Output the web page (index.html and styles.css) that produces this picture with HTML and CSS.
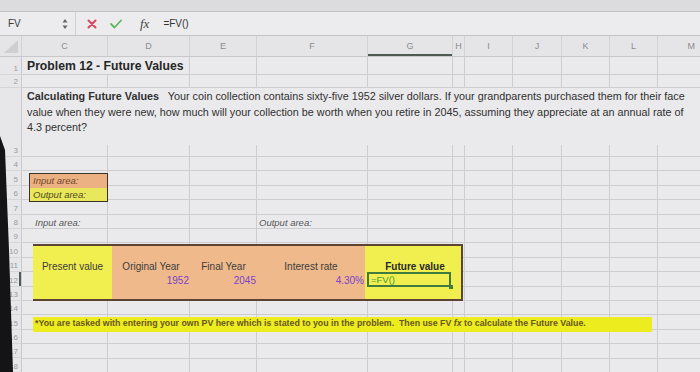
FILE: index.html
```html
<!DOCTYPE html>
<html lang="en">
<head>
    <meta charset="UTF-8">
    <meta name="viewport" content="width=device-width, initial-scale=1.0">
    <title>Problem 12 - Future Values</title>
    <link rel="stylesheet" href="styles.css">
</head>
<body>
<div class="app">

    <div class="ribbon"></div>

    <!-- Formula bar -->
    <div class="formula-bar">
        <div class="name-box">
            <span>FV</span>
            <svg class="spinner" width="6" height="12" viewBox="0 0 6 12">
                <path d="M3 1 L5.5 4.5 H0.5 Z M3 11 L5.5 7.5 H0.5 Z" fill="#666"/>
            </svg>
        </div>
        <svg class="fb-icon cancel" width="10" height="10" viewBox="0 0 10 10">
            <path d="M1.5 1.5 L8.5 8.5 M8.5 1.5 L1.5 8.5" stroke="#d9475c" stroke-width="2" stroke-linecap="round"/>
        </svg>
        <svg class="fb-icon enter" width="12" height="10" viewBox="0 0 12 10">
            <path d="M1 5 L4.5 8.5 L11 1.5" fill="none" stroke="#5cb860" stroke-width="1.8" stroke-linecap="round" stroke-linejoin="round"/>
        </svg>
        <span class="fx">fx</span>
        <span class="formula">=FV()</span>
    </div>

    <!-- Column headers -->
    <div class="col-headers">
        <span class="corner"></span>
        <span>C</span>
        <span>D</span>
        <span>E</span>
        <span>F</span>
        <span class="active">G</span>
        <span>H</span>
        <span>I</span>
        <span>J</span>
        <span>K</span>
        <span>L</span>
        <span class="last">M</span>
    </div>

    <!-- Sheet -->
    <div class="sheet">
        <span class="rh" style="grid-row: 1">1</span>
        <span class="rh" style="grid-row: 2">2</span>
        <span class="rh" style="grid-row: 3">3</span>
        <span class="rh" style="grid-row: 4">4</span>
        <span class="rh" style="grid-row: 5">5</span>
        <span class="rh" style="grid-row: 6">6</span>
        <span class="rh" style="grid-row: 7">7</span>
        <span class="rh" style="grid-row: 8">8</span>
        <span class="rh" style="grid-row: 9">9</span>
        <span class="rh" style="grid-row: 10">10</span>
        <span class="rh" style="grid-row: 11">11</span>
        <span class="rh selected" style="grid-row: 12">12</span>
        <span class="rh" style="grid-row: 13">13</span>
        <span class="rh" style="grid-row: 14">14</span>
        <span class="rh" style="grid-row: 15">15</span>
        <span class="rh" style="grid-row: 16">16</span>
        <span class="rh" style="grid-row: 17">17</span>
        <span class="rh" style="grid-row: 18">18</span>

        <div class="title">Problem 12 - Future Values</div>

        <div class="problem">
            <b>Calculating Future Values</b>&nbsp;&nbsp; Your coin collection contains sixty-five 1952 silver dollars. If your grandparents purchased them for their face<br>
            value when they were new, how much will your collection be worth when you retire in 2045, assuming they appreciate at an annual rate of<br>
            4.3 percent?
        </div>

        <div class="legend">
            <span class="legend-in">Input area:</span>
            <span class="legend-out">Output area:</span>
        </div>

        <span class="area-label in-label">Input area:</span>
        <span class="area-label out-label">Output area:</span>

        <div class="calc">
            <span class="head c1">Present value</span>
            <span class="head c2">Original Year</span>
            <span class="head c3">Final Year</span>
            <span class="head c4">Interest rate</span>
            <span class="head c5 strong">Future value</span>
            <span class="num c2">1952</span>
            <span class="num c3">2045</span>
            <span class="num c4">4.30%</span>
            <span class="active-cell">=FV()</span>
        </div>

        <div class="note">
            *You are tasked with entering your own PV here which is stated to you in the problem.&nbsp; Then use FV <i>fx</i> to calculate the Future Value.
        </div>
    </div>

    <!-- dark edge of the monitor bezel -->
    <svg class="bezel" width="16" height="372" viewBox="0 0 16 372">
        <polygon points="0,136 5,150 9,250 13,372 0,372" fill="#141416"/>
    </svg>

</div>
</body>
</html>
```

FILE: styles.css
```css
* {
    box-sizing: border-box;
}

body {
    margin: 0;
    font-family: "Liberation Sans", Arial, sans-serif;
    background-color: #e9e9eb;
    color: #2e2e2e;
    overflow: hidden;
}

.app {
    position: relative;
    width: 700px;
    height: 372px;
    overflow: hidden;
}

.bezel {
    position: absolute;
    left: 0;
    top: 0;
}

/* Toolbar strip + formula bar */
.ribbon {
    height: 12px;
    background-color: #dcdcde;
    border-bottom: 1px solid #c2c2c4;
}

.formula-bar {
    height: 24px;
    display: flex;
    align-items: center;
    background-color: #ececee;
    border-bottom: 1px solid #c4c4c6;
}

.name-box {
    width: 76px;
    height: 100%;
    display: flex;
    align-items: center;
    justify-content: space-between;
    padding: 0 7px 0 8px;
    border-right: 1px solid #d0d0d2;
    font-size: 10px;
    color: #3a3a3a;
}

.cancel {
    margin-left: 11px;
}

.enter {
    margin-left: 13px;
}

.fx {
    margin-left: 18px;
    font-family: "Liberation Serif", "Times New Roman", serif;
    font-style: italic;
    font-size: 13px;
    color: #444;
}

.formula {
    margin-left: 14px;
    font-size: 10px;
    color: #333;
}

/* Column headers */
.col-headers {
    display: grid;
    grid-template-columns: 22px 86px 82px 67px 111px 85px 12px 48px 49px 48px 48px 42px;
    height: 21px;
    background-color: #e5e5e7;
    border-bottom: 1px solid #c8c8ca;
}

.col-headers span {
    border-right: 1px solid #d3d3d5;
    font-size: 9px;
    line-height: 20px;
    text-align: center;
    color: #8c8c90;
}

.col-headers .active {
    box-shadow: inset 0 -2px #4f5a52;
}

.col-headers .last {
    text-align: right;
    padding-right: 5px;
    border-right: none;
}

.col-headers .corner {
    position: relative;
}

.col-headers .corner::before {
    content: "";
    position: absolute;
    left: 4px;
    bottom: 3px;
    border-style: solid;
    border-width: 0 0 13px 14px;
    border-color: transparent transparent #cfcfd2 transparent;
}

/* Sheet grid */
.sheet {
    --grid: #cdcdd0;
    display: grid;
    grid-template-columns: 22px 86px 82px 67px 111px 85px 12px 48px 49px 48px 48px 42px;
    grid-template-rows: 18px 13px 69px repeat(15, 14.4px);
    background-color: #eaeaec;
    background-image:
        linear-gradient(var(--grid), var(--grid)),
        linear-gradient(var(--grid), var(--grid)),
        linear-gradient(var(--grid), var(--grid)),
        linear-gradient(var(--grid), var(--grid)),
        linear-gradient(var(--grid), var(--grid)),
        linear-gradient(var(--grid), var(--grid)),
        linear-gradient(var(--grid), var(--grid)),
        linear-gradient(var(--grid), var(--grid)),
        linear-gradient(var(--grid), var(--grid)),
        linear-gradient(var(--grid), var(--grid)),
        linear-gradient(var(--grid), var(--grid)),
        linear-gradient(var(--grid), var(--grid)),
        linear-gradient(var(--grid), var(--grid)),
        repeating-linear-gradient(to bottom, transparent 0 13.4px, var(--grid) 13.4px 14.4px);
    background-size:
        1px 100%, 1px 100%, 1px 100%, 1px 100%, 1px 100%,
        1px 100%, 1px 100%, 1px 100%, 1px 100%, 1px 100%,
        100% 1px, 100% 1px, 100% 1px,
        100% 216px;
    background-position:
        107px 0, 189px 0, 256px 0, 367px 0, 452px 0,
        464px 0, 512px 0, 561px 0, 609px 0, 657px 0,
        0 17px, 0 30px, 0 99px,
        0 100px;
    background-repeat: no-repeat;
}

/* Row headers */
.rh {
    grid-column: 1;
    display: flex;
    align-items: flex-end;
    justify-content: flex-end;
    padding: 0 3px 1px 0;
    background-color: #e7e7e9;
    border-right: 1px solid #c9c9cb;
    border-bottom: 1px solid #d6d6d8;
    font-size: 8px;
    color: #9a9aa0;
}

.rh.selected {
    box-shadow: inset -2px 0 #4f5a52;
}

/* Content */
.title {
    grid-row: 1;
    grid-column: 2 / 4;
    margin-right: 1px;
    padding-left: 5px;
    background-color: #eaeaec;
    border-bottom: 1px solid var(--grid);
    font-size: 12.2px;
    font-weight: bold;
    line-height: 18px;
    color: #262626;
}

.problem {
    grid-row: 3;
    grid-column: 2 / -1;
    margin-bottom: 12px;
    padding: 1px 0 0 5px;
    background-color: #eaeaec;
    font-size: 10.8px;
    line-height: 15.5px;
    white-space: nowrap;
    color: #303030;
}

.legend {
    grid-row: 5 / 7;
    grid-column: 2;
    display: flex;
    flex-direction: column;
    margin: 2px 0 -2px 7px;
    border: 1.5px solid #3a3224;
    font-size: 9.5px;
    font-style: italic;
}

.legend span {
    flex: 1;
    padding-left: 3px;
    line-height: 13px;
}

.legend-in {
    background-color: #ecb182;
    color: #6e4629;
}

.legend-out {
    background-color: #e9e85c;
    color: #4e4a1e;
}

.area-label {
    grid-row: 8;
    align-self: end;
    padding-bottom: 1px;
    font-size: 9.5px;
    font-style: italic;
    color: #555;
}

.in-label {
    grid-column: 2;
    padding-left: 13px;
}

.out-label {
    grid-column: 5;
    padding-left: 2px;
}

/* Calculation block */
.calc {
    grid-row: 10 / 14;
    grid-column: 2 / 7;
    margin: 1px -10px 0 11px;
    display: grid;
    grid-template-columns: 79px 78px 67px 108px 96px;
    grid-template-rows: repeat(4, 1fr);
    background: linear-gradient(to right, #f1ee4f 0 79px, #efb98b 79px 332px, #f1ee4f 332px);
    border-top: 2px solid #5b4532;
    border-bottom: 2px solid #5b4532;
    border-right: 2px solid #5b4532;
    font-size: 10px;
}

.calc span {
    align-self: end;
}

.head {
    grid-row: 2;
    text-align: center;
    color: #3c3c3c;
}

.head.strong {
    font-weight: bold;
    color: #2a2a2a;
    padding-left: 4px;
}

.c1 { grid-column: 1; }
.c2 { grid-column: 2; }
.c3 { grid-column: 3; }
.c4 { grid-column: 4; }
.c5 { grid-column: 5; }

.num {
    grid-row: 3;
    text-align: right;
    padding-right: 1px;
    color: #7b43c9;
}

.active-cell {
    grid-row: 3;
    grid-column: 5;
    position: relative;
    height: 15px;
    margin: 0 10px -1px 2px;
    padding-left: 2px;
    border: 2px solid #3f7a3e;
    font-size: 9.5px;
    line-height: 11px;
    color: #3f9a3c;
}

.active-cell::after {
    content: "";
    position: absolute;
    right: -4px;
    bottom: -4px;
    width: 4px;
    height: 4px;
    background-color: #3f7a3e;
}

.note {
    grid-row: 15;
    grid-column: 2 / -1;
    margin: 2px 48px -2px 11px;
    padding-left: 2px;
    background-color: #ecec1f;
    font-size: 8.8px;
    font-weight: bold;
    line-height: 13px;
    white-space: nowrap;
    color: #6a5620;
}
```
